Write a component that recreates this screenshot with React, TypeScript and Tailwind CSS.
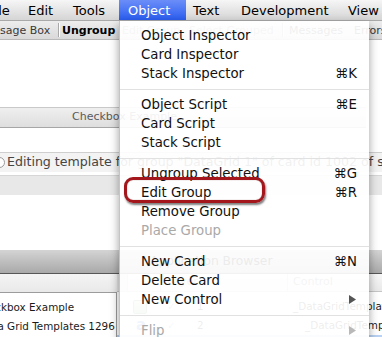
import React from "react";

const Sep = () => (
  <div className="h-[12px] flex items-center">
    <div className="h-px w-full bg-[#e1e1e1]" />
  </div>
);

const Arrow = ({ disabled }: { disabled?: boolean }) => (
  <svg width="7" height="9" viewBox="0 0 7 9" className="mr-px">
    <path d="M0 0 L7 4.5 L0 9 Z" fill={disabled ? "#b9b9b9" : "#555555"} />
  </svg>
);

const Item = ({
  label,
  sc,
  disabled,
  arrow,
}: {
  label: string;
  sc?: string;
  disabled?: boolean;
  arrow?: boolean;
}) => (
  <div
    className={`h-[19px] flex items-center justify-between pl-[21px] pr-[12px] ${
      disabled ? "text-[#a9a9a9]" : "text-[#111111]"
    }`}
  >
    <span>{label}</span>
    {sc && <span>{sc}</span>}
    {arrow && <Arrow disabled={disabled} />}
  </div>
);

export default function App() {
  return (
    <div className="relative w-[382px] h-[337px] overflow-hidden bg-white font-['DejaVu_Sans',sans-serif] whitespace-nowrap">
      {/* Menu bar */}
      <div className="h-[21px] flex items-stretch bg-gradient-to-b from-[#f6f6f6] to-[#d5d5d5] border-b border-[#a9a9a9] text-[13px] text-black leading-none">
        <div className="w-[41px] -ml-[22px] pl-[10px] flex items-center shrink-0">File</div>
        <div className="w-[45px] pl-[9px] flex items-center shrink-0">Edit</div>
        <div className="w-[55px] pl-[9px] flex items-center shrink-0">Tools</div>
        <div className="w-[67px] pl-[9px] flex items-center shrink-0 text-white bg-gradient-to-b from-[#6b8df8] to-[#2a5cee]">
          Object
        </div>
        <div className="w-[46px] pl-[7px] flex items-center shrink-0">Text</div>
        <div className="w-[107px] pl-[9px] flex items-center shrink-0">Development</div>
        <div className="pl-[9px] flex items-center shrink-0">View</div>
      </div>

      {/* Toolbar */}
      <div className="h-[19px] flex items-center bg-gradient-to-b from-[#ededed] to-[#d9d9d9] border-b border-[#b9b9b9] text-[11px] text-[#3a3a3a] leading-none">
        <span className="w-[80px] -ml-[22px] shrink-0">Message Box</span>
        <span className="w-[2px] h-[14px] shrink-0 border-l border-[#a9a9a9] border-r border-r-white" />
        <span className="w-[62px] pl-[2px] shrink-0 font-bold text-black">Ungroup</span>
        <span className="w-[67px] shrink-0 text-[#8a8a8a]">Edit Group</span>
        <span className="w-[93px] shrink-0 text-[#8a8a8a]">Select Grouped</span>
        <span className="w-[2px] h-[14px] shrink-0 border-l border-[#a9a9a9] border-r border-r-white" />
        <span className="w-[70px] pl-[5px] shrink-0">Messages</span>
        <span className="shrink-0">Errors</span>
      </div>

      {/* Upper content */}
      <div className="h-[67px] bg-white" />
      <div className="h-[21px] w-[366px] flex items-center pl-[72px] bg-gradient-to-b from-[#efefef] to-[#dedede] border-t border-[#c9c9c9] border-b border-b-[#a6a6a6] text-[11px] text-[#5a5a5a]">
        Checkbox Example
      </div>
      <div className="h-[24px] bg-white" />
      <div className="h-[20px] flex items-center bg-[#f3f3f3] border-t border-[#cfcfcf] text-[12.6px] text-[#454545]">
        <span className="-ml-[6px] mr-[2px] w-[11px] h-[11px] rounded-full border border-[#9a9a9a] bg-white shrink-0" />
        <span>Editing template for group "DataGrid 1" of card id 1002 of stack</span>
      </div>
      <div className="h-[3px] bg-white" />
      <div className="h-[20px] bg-[#e8e8e8] border-t border-[#d6d6d6]" />
      <div className="h-[55px] bg-white" />

      {/* Application Browser window */}
      <div className="h-[24px] flex items-center bg-gradient-to-b from-[#d4d4d4] to-[#a9a9a9] border-b border-[#575757] text-[12.3px] text-black pl-[150px]">
        Application Browser
      </div>
      <div className="flex">
        <div className="w-[117px] shrink-0">
          <div className="h-[18px] bg-gradient-to-b from-[#f4f4f4] to-[#e9e9e9]" />
          <div className="h-[100px] bg-white border-t border-r border-[#9c9c9c] pt-[5px] text-[10.4px] text-[#1a1a1a]">
            <div className="h-[19px] flex items-center -ml-[25px]">Checkbox Example</div>
            <div className="h-[19px] flex items-center -ml-[21px]">Data Grid Templates 1296</div>
          </div>
        </div>
        <div className="flex-1 bg-white">
          <div className="h-[18px] flex border-b border-[#c6c6c6] bg-gradient-to-b from-[#f7f7f7] to-[#e9e9e9] text-[11px] text-[#777777]">
            <div className="w-[10px] shrink-0 bg-[#e4e4e4]" />
            <div className="w-[33px] shrink-0 border-l border-[#cfcfcf]" />
            <div className="w-[127px] shrink-0 border-l border-[#cfcfcf] pl-[6px] flex items-center">Layer</div>
            <div className="flex-1 border-l border-[#cfcfcf] pl-[5px] flex items-center">Control</div>
          </div>
          <div className="pt-[5px] text-[10.4px] text-[#222222]">
            <div className="h-[19px] flex items-center">
              <div className="w-[10px] shrink-0" />
              <div className="w-[33px] shrink-0 flex items-center pl-[6px]">
                <span className="w-[14px] h-[14px] rounded-[2px] bg-gradient-to-b from-[#dfeedd] to-[#9cc596] border border-[#7a9a76]" />
              </div>
              <div className="w-[127px] shrink-0 flex items-center pl-[7px]">
                <span className="text-[#7ba0c8] w-[30px]">✓</span>
                <span>1</span>
              </div>
              <div className="pl-[6px]">_DataGridTemplate</div>
            </div>
            <div className="h-[19px] flex items-center">
              <div className="w-[10px] shrink-0" />
              <div className="w-[33px] shrink-0 flex items-center pl-[9px]">
                <span className="text-[15px] font-bold text-[#3f6fd0] leading-none">a</span>
              </div>
              <div className="w-[127px] shrink-0 flex items-center pl-[7px]">
                <span className="text-[#7ba0c8] w-[30px]">✓</span>
                <span>2</span>
              </div>
              <div className="pl-[18px]">_DataGridTemplate</div>
            </div>
            <div className="h-[19px] bg-[#b9d2f3]" />
          </div>
        </div>
      </div>

      {/* Object menu */}
      <div className="absolute left-[119px] top-[21px] w-[250px] h-[330px] bg-white/[0.92] pt-[5px] text-[13.3px] leading-none shadow-[0_4px_9px_rgba(0,0,0,0.38)] border-l border-[#c4c4c4]">
        <Item label="Object Inspector" />
        <Item label="Card Inspector" />
        <Item label="Stack Inspector" sc="⌘K" />
        <Sep />
        <Item label="Object Script" sc="⌘E" />
        <Item label="Card Script" />
        <Item label="Stack Script" />
        <Sep />
        <Item label="Ungroup Selected" sc="⌘G" />
        <Item label="Edit Group" sc="⌘R" />
        <Item label="Remove Group" />
        <Item label="Place Group" disabled />
        <Sep />
        <Item label="New Card" sc="⌘N" />
        <Item label="Delete Card" />
        <Item label="New Control" arrow />
        <Sep />
        <Item label="Flip" disabled arrow />
      </div>

      {/* Red highlight box */}
      <div className="absolute left-[124px] top-[177px] w-[141px] h-[26px] rounded-[9px] border-[3px] border-[#a3161c] shadow-[1px_2px_2px_rgba(0,0,0,0.5),inset_0_0_1px_rgba(90,0,0,0.6)]" />
    </div>
  );
}
